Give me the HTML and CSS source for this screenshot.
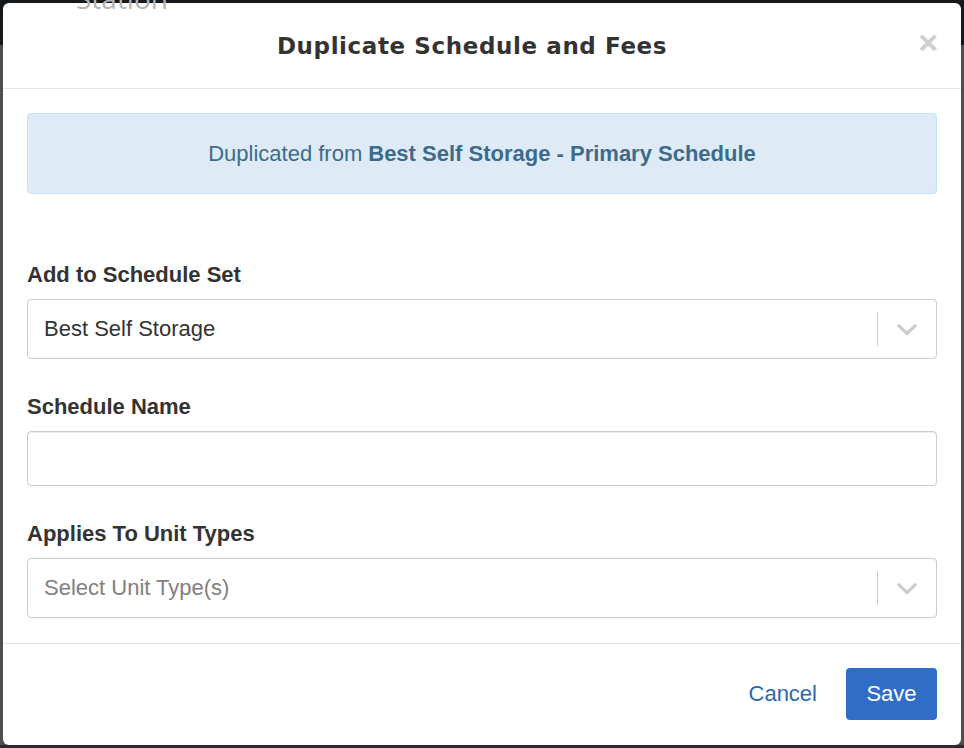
FILE: index.html
```html
<!DOCTYPE html>
<html lang="en">
<head>
<meta charset="utf-8">
<title>Duplicate Schedule and Fees</title>
<link rel="stylesheet" href="styles.css">
</head>
<body>
<div class="backdrop-text">Station</div>
<div class="modal">
  <div class="modal-header">
    <h2 class="modal-title">Duplicate Schedule and Fees</h2>
    <button class="close" type="button" aria-label="Close">&#215;</button>
  </div>
  <div class="modal-body">
    <div class="alert">Duplicated from <strong>Best Self Storage - Primary Schedule</strong></div>
    <div class="form-group first">
      <label class="label">Add to Schedule Set</label>
      <div class="select">
        <span class="select-value">Best Self Storage</span>
        <span class="select-sep"></span>
        <span class="select-arrow"><svg width="20" height="12" viewBox="0 0 20 12"><path d="M2 2 L10 9.5 L18 2" fill="none" stroke="#cccccc" stroke-width="3.2" stroke-linecap="square"/></svg></span>
      </div>
    </div>
    <div class="form-group">
      <label class="label">Schedule Name</label>
      <input class="input" type="text">
    </div>
    <div class="form-group">
      <label class="label">Applies To Unit Types</label>
      <div class="select">
        <span class="select-value placeholder">Select Unit Type(s)</span>
        <span class="select-sep"></span>
        <span class="select-arrow"><svg width="20" height="12" viewBox="0 0 20 12"><path d="M2 2 L10 9.5 L18 2" fill="none" stroke="#cccccc" stroke-width="3.2" stroke-linecap="square"/></svg></span>
      </div>
    </div>
  </div>
  <div class="modal-footer">
    <button class="btn-link" type="button">Cancel</button>
    <button class="btn-primary" type="button">Save</button>
  </div>
</div>
</body>
</html>
```
FILE: styles.css
```css
html, body {
  margin: 0;
  padding: 0;
}
body {
  width: 964px;
  height: 748px;
  overflow: hidden;
  background: linear-gradient(to bottom, #16191c 0, #16191c 45px, #4f4f4f 45px, #4f4f4f 745px, #2a2a2a 745px);
  font-family: "Liberation Sans", Arial, sans-serif;
  color: #333;
  position: relative;
  padding-top: 3px;
  box-sizing: border-box;
}
.backdrop-text {
  position: absolute;
  left: 76px;
  top: -17px;
  z-index: 2;
  font-family: "Open Sans", sans-serif;
  font-size: 28px;
  line-height: 30px;
  color: #b5b5b5;
}
.modal {
  position: relative;
  margin: 0 3px;
  width: 958px;
  height: 742px;
  background: #fff;
  border-radius: 6px;
  display: flex;
  flex-direction: column;
}
.modal-header {
  height: 85px;
  border-bottom: 1px solid #e5e5e5;
  display: flex;
  align-items: center;
  justify-content: center;
  position: relative;
}
.modal-title {
  margin: 0;
  font-family: "DejaVu Sans", sans-serif;
  font-weight: 700;
  font-size: 23px;
  letter-spacing: 0.6px;
  color: #333;
  padding-right: 20px;
}
.close {
  position: absolute;
  right: 23px;
  top: 22px;
  border: 0;
  background: none;
  padding: 0;
  font-family: "Liberation Sans", Arial, sans-serif;
  font-size: 34px;
  font-weight: 700;
  line-height: 34px;
  color: #cfcfcf;
}
.modal-body {
  padding: 24px 24px 25px;
  flex: 1;
}
.alert {
  height: 79px;
  border: 1px solid #c5e3f0;
  background: #deebf6;
  border-radius: 4px;
  color: #3d6b8c;
  font-size: 22px;
  display: flex;
  align-items: center;
  justify-content: center;
}
.alert strong {
  margin-left: 6px;
}
.form-group {
  display: flex;
  flex-direction: column;
  margin-top: 34px;
}
.form-group.first {
  margin-top: 67px;
}
.label {
  font-weight: 700;
  font-size: 22px;
  line-height: 28px;
  margin-bottom: 10px;
  color: #333;
}
.select {
  height: 60px;
  box-sizing: border-box;
  border: 1px solid #cccccc;
  border-radius: 4px;
  display: flex;
  align-items: center;
}
.select-value {
  flex: 1;
  padding-left: 16px;
  font-size: 22px;
  color: #333;
}
.select-value.placeholder {
  color: #808080;
}
.select-sep {
  width: 1px;
  height: 34px;
  background: #cccccc;
}
.select-arrow {
  width: 58px;
  display: flex;
  justify-content: center;
  align-items: center;
  padding-top: 2px;
}
.input {
  height: 55px;
  box-sizing: border-box;
  border: 1px solid #cccccc;
  border-radius: 4px;
  box-shadow: inset 0 1px 1px rgba(0,0,0,0.075);
  margin: 0;
  width: 100%;
}
.modal-footer {
  border-top: 1px solid #e5e5e5;
  padding: 24px 24px 25px;
  display: flex;
  justify-content: flex-end;
  align-items: center;
  gap: 17px;
}
.btn-link {
  border: 0;
  background: none;
  font-family: "Liberation Sans", Arial, sans-serif;
  font-size: 22px;
  color: #2c69b0;
  padding: 0 12px;
  height: 52px;
}
.btn-primary {
  width: 91px;
  height: 52px;
  border: 0;
  border-radius: 4px;
  background: #2f6dc6;
  color: #fff;
  font-family: "Liberation Sans", Arial, sans-serif;
  font-size: 22px;
}
```
